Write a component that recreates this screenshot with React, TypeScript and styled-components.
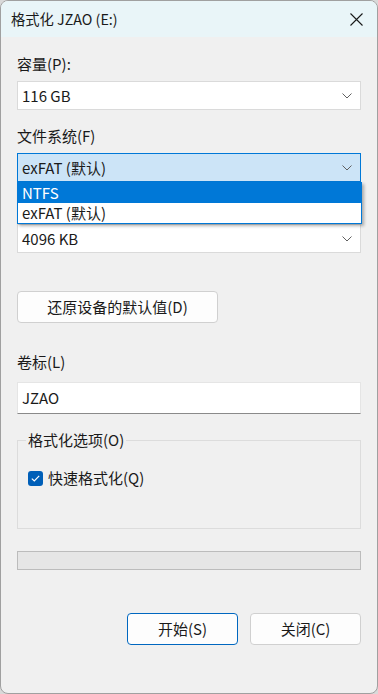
import React from 'react';
import styled, { createGlobalStyle } from 'styled-components';

const GlobalStyle = createGlobalStyle`
  html, body {
    margin: 0;
    padding: 0;
    background: #d9d9d9;
  }
  body {
    font-family: "Noto Sans CJK SC", "Noto Sans", sans-serif;
    font-size: 15px;
    color: #1a1a1a;
  }
`;

const Window = styled.div`
  box-sizing: border-box;
  width: 378px;
  height: 694px;
  background: #f0f0f0;
  border: 1px solid #a0a0a0;
  border-radius: 8px;
  overflow: hidden;
  display: flex;
  flex-direction: column;
`;

const TitleBar = styled.div`
  height: 36px;
  flex: none;
  background: #e9f5f8;
  display: flex;
  align-items: center;
  justify-content: space-between;
  padding: 0 14px 0 10px;
`;

const Title = styled.span`
  font-size: 14.3px;
  line-height: 20px;
  color: #1a1a1a;
`;

const Body = styled.div`
  display: flex;
  flex-direction: column;
  padding: 17px 16px 0 16px;
`;

const Label = styled.div<{ $top?: number; $bottom?: number }>`
  line-height: 20px;
  height: 20px;
  margin-top: ${(p) => p.$top ?? 0}px;
  margin-bottom: ${(p) => p.$bottom ?? 7}px;
`;

const ComboWrap = styled.div`
  position: relative;
`;

const Combo = styled.div<{ $focused?: boolean }>`
  box-sizing: border-box;
  height: 29px;
  display: flex;
  align-items: center;
  justify-content: space-between;
  padding: 0 8px 0 4px;
  background: ${(p) => (p.$focused ? '#cce4f7' : '#ffffff')};
  border: 1px solid ${(p) => (p.$focused ? '#0078d7' : '#dadada')};
  line-height: 20px;
`;

const DropList = styled.div`
  position: absolute;
  top: 100%;
  left: 0;
  right: -1px;
  z-index: 2;
  background: #ffffff;
  border: 1px solid #0078d7;
  box-shadow: 2px 2px 3px rgba(0, 0, 0, 0.3);
`;

const DropItem = styled.div<{ $selected?: boolean }>`
  height: 20px;
  line-height: 20px;
  padding-left: 4px;
  background: ${(p) => (p.$selected ? '#0078d7' : '#ffffff')};
  color: ${(p) => (p.$selected ? '#ffffff' : '#1a1a1a')};
`;

const Button = styled.button<{ $primary?: boolean; $width: number }>`
  box-sizing: border-box;
  width: ${(p) => p.$width}px;
  height: 32px;
  background: #fdfdfd;
  border: 1px solid ${(p) => (p.$primary ? '#0067c0' : '#d0d0d0')};
  border-radius: 4px;
  font-family: inherit;
  font-size: 15px;
  color: #1a1a1a;
  padding: 0;
  line-height: 20px;
`;

const TextInput = styled.div`
  box-sizing: border-box;
  height: 32px;
  background: #ffffff;
  border: 1px solid #e5e5e5;
  border-bottom: 1px solid #8a8a8a;
  padding: 0 4px;
  display: flex;
  align-items: center;
  line-height: 20px;
`;

const Group = styled.fieldset`
  box-sizing: border-box;
  margin: 16px 0 0 0;
  padding: 18px 10px 0 10px;
  height: 99px;
  border: 1px solid #dcdcdc;
  min-width: 0;
`;

const Legend = styled.legend`
  padding: 0 2px;
  margin-left: -2px;
  line-height: 20px;
`;

const CheckRow = styled.label`
  display: flex;
  align-items: center;
  gap: 5px;
  line-height: 20px;
`;

const Check = styled.span`
  width: 15px;
  height: 15px;
  border-radius: 3px;
  background: #005fb8;
  display: inline-flex;
  align-items: center;
  justify-content: center;
`;

const Progress = styled.div`
  box-sizing: border-box;
  margin-top: 22px;
  height: 19px;
  background: #e6e6e6;
  border: 1px solid #bcbcbc;
`;

const Footer = styled.div`
  display: flex;
  justify-content: flex-end;
  gap: 12px;
  margin-top: 43px;
`;

const Chevron = () => (
  <svg width="10" height="6" viewBox="0 0 10 6">
    <path d="M0.5 0.5 L5 5 L9.5 0.5" fill="none" stroke="#606060" strokeWidth="1" />
  </svg>
);

const CloseIcon = () => (
  <svg width="13" height="13" viewBox="0 0 13 13">
    <path d="M0.5 0.5 L12.5 12.5 M12.5 0.5 L0.5 12.5" stroke="#1a1a1a" strokeWidth="1.1" />
  </svg>
);

export default function App() {
  return (
    <>
      <GlobalStyle />
      <Window>
        <TitleBar>
          <Title>格式化 JZAO (E:)</Title>
          <CloseIcon />
        </TitleBar>
        <Body>
          <Label>容量(P):</Label>
          <Combo>
            <span>116 GB</span>
            <Chevron />
          </Combo>

          <Label $top={16}>文件系统(F)</Label>
          <ComboWrap>
            <Combo $focused>
              <span>exFAT (默认)</span>
              <Chevron />
            </Combo>
            <DropList>
              <DropItem $selected>NTFS</DropItem>
              <DropItem>exFAT (默认)</DropItem>
            </DropList>
          </ComboWrap>

          {/* the allocation-size label sits under the open list */}
          <Label $top={15} />
          <Combo>
            <span>4096 KB</span>
            <Chevron />
          </Combo>

          <div style={{ marginTop: 38 }}>
            <Button $width={201}>还原设备的默认值(D)</Button>
          </div>

          <Label $top={29} $bottom={10}>
            卷标(L)
          </Label>
          <TextInput>JZAO</TextInput>

          <Group>
            <Legend>格式化选项(O)</Legend>
            <CheckRow>
              <Check>
                <svg width="9" height="7" viewBox="0 0 9 7">
                  <path d="M0.8 3.6 L3.3 6 L8.2 0.8" fill="none" stroke="#ffffff" strokeWidth="1.2" />
                </svg>
              </Check>
              快速格式化(Q)
            </CheckRow>
          </Group>

          <Progress />

          <Footer>
            <Button $primary $width={111}>开始(S)</Button>
            <Button $width={111}>关闭(C)</Button>
          </Footer>
        </Body>
      </Window>
    </>
  );
}
